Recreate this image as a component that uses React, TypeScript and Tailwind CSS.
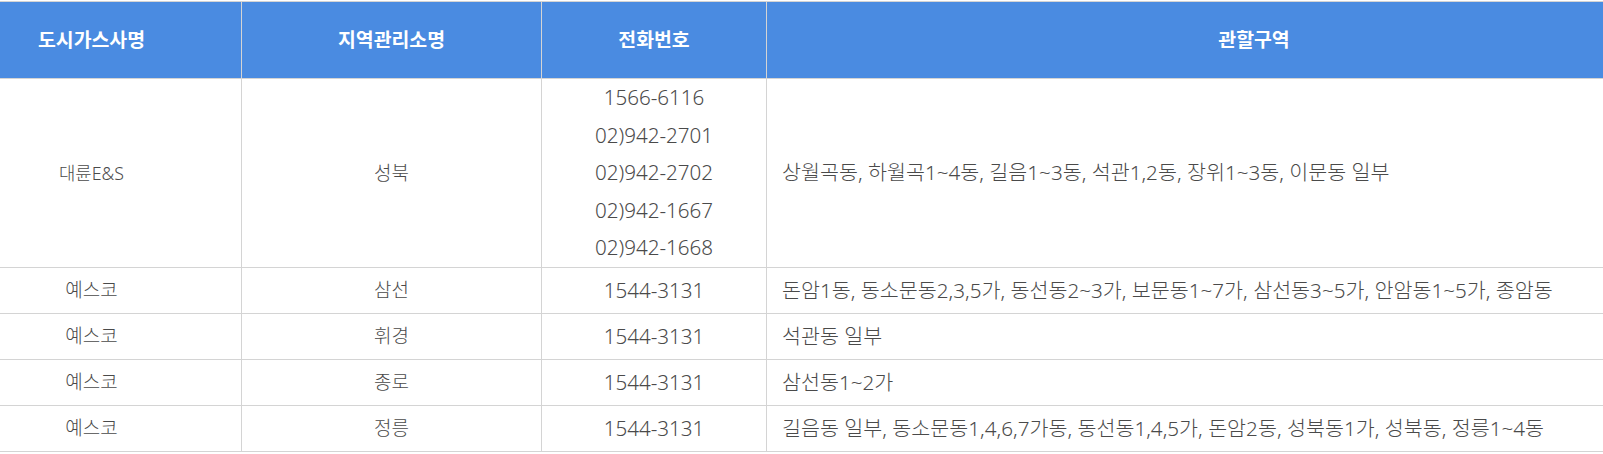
import React from "react";

const rows = [
  {
    company: "대륜E&S",
    small: true,
    office: "성북",
    phones: ["1566-6116", "02)942-2701", "02)942-2702", "02)942-1667", "02)942-1668"],
    area: "상월곡동, 하월곡1~4동, 길음1~3동, 석관1,2동, 장위1~3동, 이문동 일부",
  },
  {
    company: "예스코",
    small: false,
    office: "삼선",
    phones: ["1544-3131"],
    area: "돈암1동, 동소문동2,3,5가, 동선동2~3가, 보문동1~7가, 삼선동3~5가, 안암동1~5가, 종암동",
  },
  { company: "예스코", small: false, office: "휘경", phones: ["1544-3131"], area: "석관동 일부" },
  { company: "예스코", small: false, office: "종로", phones: ["1544-3131"], area: "삼선동1~2가" },
  {
    company: "예스코",
    small: false,
    office: "정릉",
    phones: ["1544-3131"],
    area: "길음동 일부, 동소문동1,4,6,7가동, 동선동1,4,5가, 돈암2동, 성북동1가, 성북동, 정릉1~4동",
  },
];

const font = "font-['Noto_Sans','Noto_Sans_CJK_KR',sans-serif]";

export default function App() {
  return (
    <div className={`w-[1603px] h-[454px] overflow-hidden bg-white ${font}`}>
      <div className="mt-px -ml-[58px] w-[1799px] border-t border-[#d4d4d4]">
        <div className="grid grid-cols-[300px_300px_225px_974px] bg-[#4a8be1] text-white font-bold text-[19.4px]">
          <div className="h-[77px] flex items-center justify-center border-r border-b border-[#d4d4d4]">도시가스사명</div>
          <div className="h-[77px] flex items-center justify-center border-r border-b border-[#d4d4d4]">지역관리소명</div>
          <div className="h-[77px] flex items-center justify-center border-r border-b border-[#d4d4d4]">전화번호</div>
          <div className="h-[77px] flex items-center justify-center border-b border-[#d4d4d4]">관할구역</div>
        </div>
        {rows.map((r, i) => (
          <div key={i} className="grid grid-cols-[300px_300px_225px_974px] text-[#4a4a4a] font-light">
            <div className={`flex items-center justify-center border-r border-b border-[#d4d4d4] ${r.small ? "text-[17.8px]" : "text-[19px]"}`}>{r.company}</div>
            <div className="flex items-center justify-center border-r border-b border-[#d4d4d4] text-[19px]">{r.office}</div>
            <div className="flex flex-col justify-center border-r border-b border-[#d4d4d4] text-[20.6px]">
              {r.phones.length > 1 ? (
                r.phones.map((p) => (
                  <div key={p} className="leading-[37.6px] text-center">{p}</div>
                ))
              ) : (
                <div className="h-[45px] flex items-center justify-center">{r.phones[0]}</div>
              )}
            </div>
            <div className="flex items-center pl-[15px] border-b border-[#d4d4d4] text-[20.65px] whitespace-nowrap">{r.area}</div>
          </div>
        ))}
      </div>
    </div>
  );
}
